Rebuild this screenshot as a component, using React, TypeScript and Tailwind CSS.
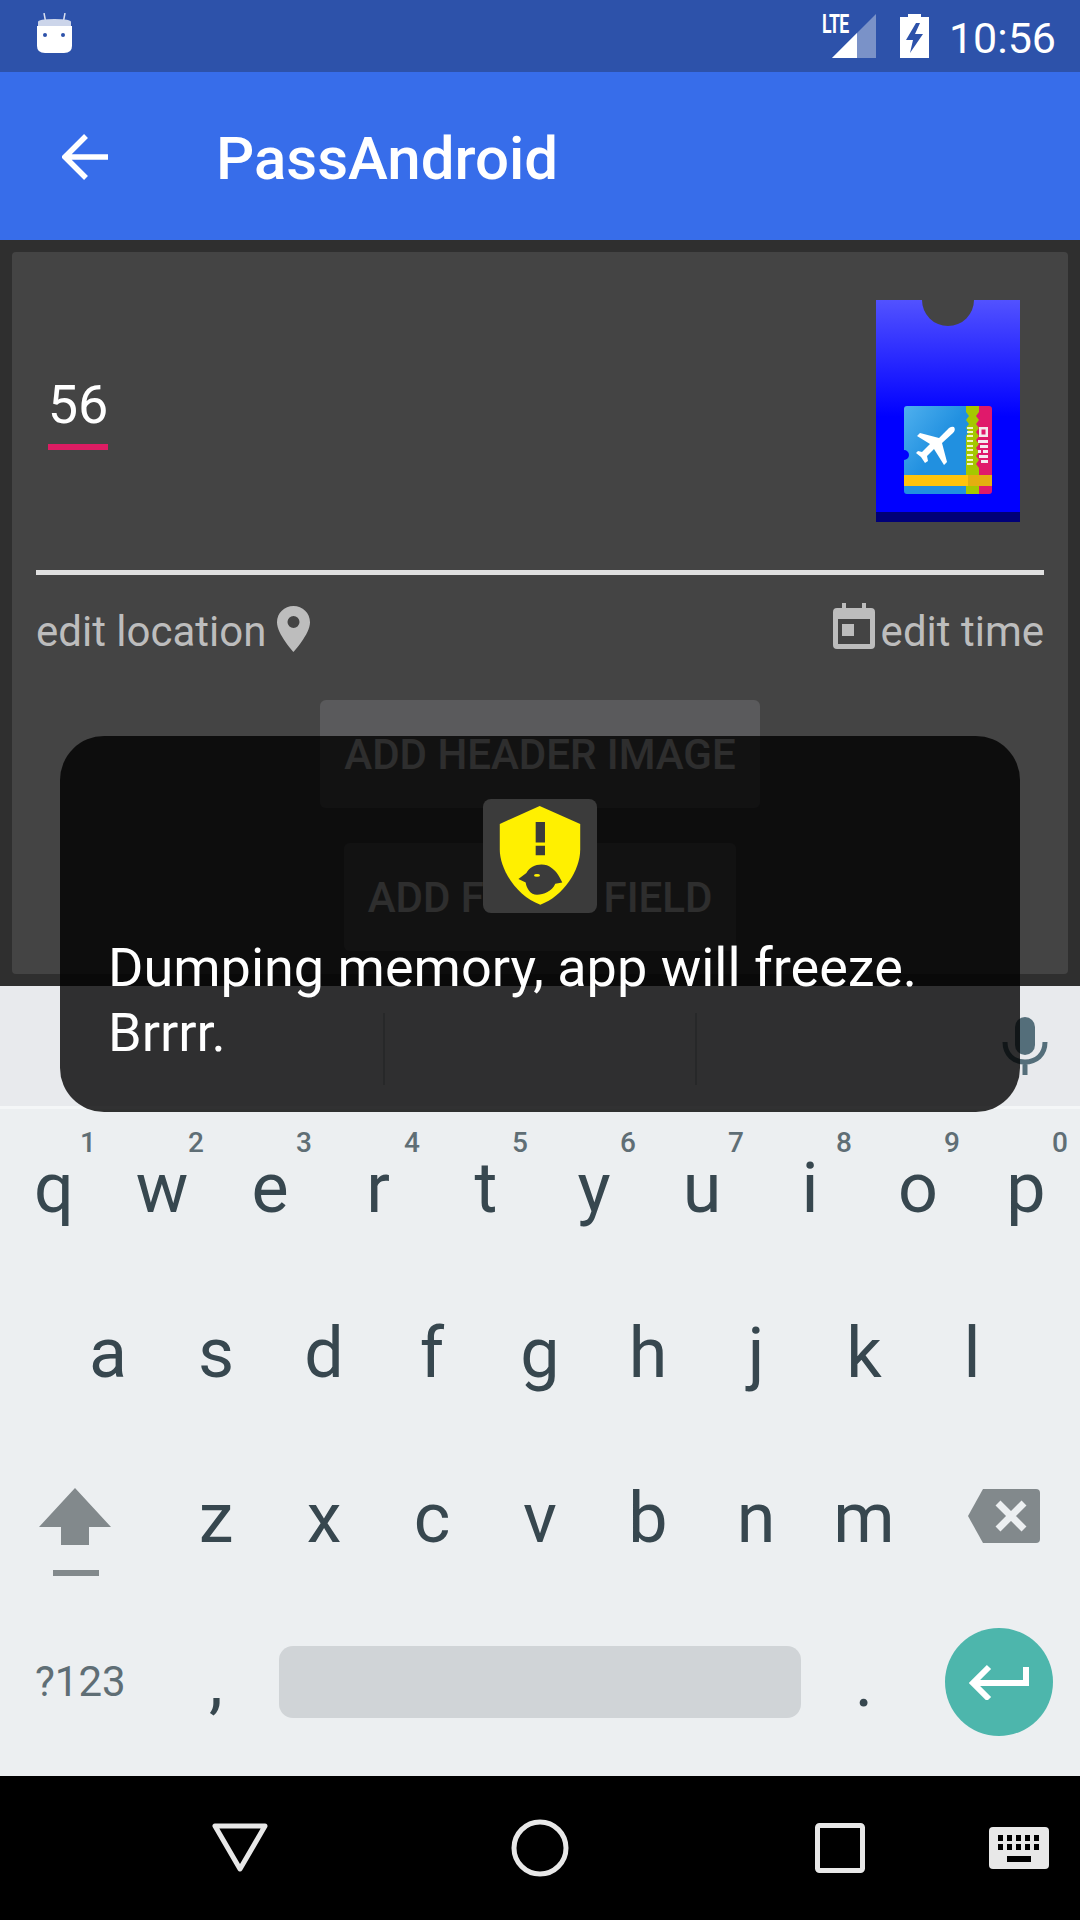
const Key = ({ c, hint }: { c: string; hint?: string }) => (
  <div className="relative flex-1 flex items-center justify-center pb-[23px] text-[70px] leading-none text-[#37474f]">
    {c}
    {hint && (
      <span className="absolute top-[11px] right-[12px] text-[28px] leading-[30px] font-medium text-[#5f6e75]">{hint}</span>
    )}
  </div>
);

const Row = ({ keys, hints }: { keys: string; hints?: string }) => (
  <div className="h-[165px] flex justify-center">
    {keys.split("").map((k, i) => (
      <div key={k} className="w-[108px] flex">
        <Key c={k} hint={hints ? hints[i] : undefined} />
      </div>
    ))}
  </div>
);

const Ticket = () => (
  <svg width="144" height="222" viewBox="0 0 144 222" className="shrink-0">
    <defs>
      <linearGradient id="tk" x1="0" y1="0" x2="0" y2="1">
        <stop offset="0" stopColor="#5252ff" />
        <stop offset="0.55" stopColor="#0000ff" />
        <stop offset="1" stopColor="#0000ff" />
      </linearGradient>
      <linearGradient id="bl" x1="0" y1="0" x2="1" y2="1">
        <stop offset="0" stopColor="#4fb0ee" />
        <stop offset="0.5" stopColor="#2190e0" />
      </linearGradient>
    </defs>
    <path d="M0 0H46A26 26 0 0 0 98 0H144V212H0Z" fill="url(#tk)" />
    <rect x="0" y="212" width="144" height="10" fill="#000077" />
    <rect x="80" y="106" width="36" height="88" rx="3" fill="#e0196b" />
    <path d="M80 106H103V112L100 116L103 120L100 124L103 128L100 132L103 136L100 140L103 144L100 148L103 152L100 156L103 160L100 164L103 168V194H80Z" fill="#a5c800" />
    <path d="M31 106H90V112L93 116L90 120L93 124L90 128L93 132L90 136V194H31Q28 194 28 191V160A4 4 0 0 0 28 150V109Q28 106 31 106Z" fill="url(#bl)" />
    <path d="M91 128h6M91 132h6M91 136h6M91 141h6M91 146h6M91 150h6M91 155h6M91 160h6M91 164h6" stroke="#eef5c8" strokeWidth="1.8" />
    <path fillRule="evenodd" d="M103 127h9v10h-9zM105.500 129.500v5h4v-5zM102 140h10v3h-10zM104 145h8v3h-8zM102 150h3v3h-3zM107 150h5v3h-5zM103 155h9v3h-9zM105 160h7v3h-7z" fill="#f4e8ee" />
    <rect x="28" y="175" width="88" height="11" fill="#ffc40c" />
    <rect x="92" y="175" width="24" height="11" fill="#e4ae10" />
    <path d="M78 127Q80 130 77 133L66 143L71 162L68 165L58 149L51 156L52 161L49 163L45 157L40 153L42 151L46 152L54 144L41 136L44 133L63 138L73 128Q76 126 78 127Z" fill="#ffffff" />
  </svg>
);

const CardBody = () => (
  <div className="w-full bg-[#444444] rounded-[4px] px-6 pt-12 flex flex-col">
    <div className="flex justify-between items-center pr-6 h-[222px]">
      <div className="ml-[12px] pt-[5px] w-[60px] flex flex-col items-center">
        <span className="text-[54px] leading-[56px] text-white">56</span>
        <div className="w-[60px] h-[6px] bg-[#dd1c63] mt-[11px]" />
      </div>
      <Ticket />
    </div>
    <div className="h-[5px] bg-[#e0e0e0] mt-[48px]" />
    <div className="flex justify-between items-center h-[48px] mt-[33px] text-[42px] leading-[48px] text-[#bdbdbd]">
      <div className="flex items-center gap-[11px]">
        <span>edit location</span>
        <svg width="33" height="46" viewBox="0 0 33 46" className="mb-[7px]">
          <path fillRule="evenodd" d="M16.5 0C7.4 0 0 7.200 0 16.200 0 28 16.500 46 16.500 46S33 28 33 16.200C33 7.200 25.600 0 16.500 0ZM16.500 22A6 6 0 1 1 16.500 10 6 6 0 0 1 16.500 22Z" fill="#bdbdbd" />
        </svg>
      </div>
      <div className="flex items-center gap-[6px]">
        <svg width="42" height="46" viewBox="0 0 42 46" className="mb-[13px]">
          <path fillRule="evenodd" d="M4 5H9V0H13V5H29V0H33V5H38Q42 5 42 9V42Q42 46 38 46H4Q0 46 0 42V9Q0 5 4 5ZM5 16V41H37V16ZM9 21H21V33H9Z" fill="#bdbdbd" />
        </svg>
        <span>edit time</span>
      </div>
    </div>
    <div className="flex flex-col items-center mt-[44px] gap-[35px] text-[42px] font-medium text-[#e4e4e4]">
      <div className="w-[440px] h-[108px] rounded-[6px] bg-[#5a5a5c] flex items-center justify-center">ADD HEADER IMAGE</div>
      <div className="w-[392px] h-[108px] rounded-[6px] bg-[#5a5a5c] flex items-center justify-center">ADD FRONT FIELD</div>
    </div>
  </div>
);

export default function App() {
  return (
    <div className="relative w-[1080px] h-[1920px] overflow-hidden flex flex-col bg-black font-['Roboto',sans-serif]">
      <div className="h-[72px] bg-[#2d52aa] flex items-center pl-[37px] pr-[24px] text-white">
        <svg width="35" height="41" viewBox="0 0 35 41" className="mb-[5px]">
          <path d="M7 0L8.500 8M28 0L26.500 8" stroke="#d8dff0" strokeWidth="1.500" />
          <path d="M1 9Q1 6 17.500 6T34 9V14H1Z" fill="#ccd5ea" />
          <path d="M0 13H35V33Q35 40 27 40H8Q0 40 0 33Z" fill="#fff" />
          <circle cx="8" cy="22" r="2" fill="#2d52aa" />
          <circle cx="26" cy="22" r="2" fill="#2d52aa" />
        </svg>
        <div className="flex-1" />
        <div className="relative w-[54px] h-[44px]">
          <span className="absolute left-0 top-[-2px] text-[26px] leading-[24px] font-bold tracking-[-1px] scale-x-[0.68] origin-left">LTE</span>
          <svg width="44" height="44" viewBox="0 0 44 44" className="absolute left-[10px] top-0">
            <path d="M0 44L44 0V44Z" fill="#7a92c8" />
            <path d="M0 44L25 19V44Z" fill="#fff" />
          </svg>
        </div>
        <svg width="29" height="44" viewBox="0 0 29 44" className="ml-[24px]">
          <path fillRule="evenodd" d="M8 0H21V3H29V44H0V3H8ZM16 9L6 26H13L10 39L23 20H15L20 9Z" fill="#fff" />
        </svg>
        <span className="ml-[20px] pt-[5px] text-[43px] leading-none">10:56</span>
      </div>

      <div className="h-[168px] bg-[#376dea] flex items-center pl-[62px] text-white">
        <svg width="48" height="48" viewBox="0 0 48 48" className="mt-[2px]">
          <path d="M46 24H4M24 3L3 24L24 45" fill="none" stroke="#fff" strokeWidth="5.500" />
        </svg>
        <span className="ml-[106px] pt-[5px] text-[60px] leading-none font-medium">PassAndroid</span>
      </div>

      <div className="h-[746px] bg-[#2f2f2f] px-3 pt-3 pb-[12px] flex">
        <CardBody />
      </div>

      <div className="h-[790px] bg-[#eceff1] flex flex-col">
        <div className="h-[123px] bg-[#e8eaed] border-b-[3px] border-[#f4f6f7] flex items-center relative">
          <div className="absolute left-[383px] top-[27px] w-[2px] h-[72px] bg-[#c4c8cb]" />
          <div className="absolute left-[695px] top-[27px] w-[2px] h-[72px] bg-[#c4c8cb]" />
          <svg width="46" height="58" viewBox="0 0 46 58" className="ml-auto mr-[32px]">
            <rect x="13" y="0" width="20" height="38" rx="10" fill="#546e7a" />
            <path d="M3 25C3 38 12 45 23 45S43 38 43 25M23 45V58" fill="none" stroke="#546e7a" strokeWidth="5" />
          </svg>
        </div>
        <div className="h-[8px]" />
        <Row keys="qwertyuiop" hints="1234567890" />
        <Row keys="asdfghjkl" />
        <div className="h-[165px] flex">
          <div className="w-[162px] flex items-start justify-center pt-[41px]">
            <svg width="72" height="88" viewBox="0 0 72 88" className="mr-[13px]">
              <path d="M36 0L72 39H50V57H22V39H0Z" fill="#82898c" />
              <rect x="14" y="82" width="46" height="6" fill="#82898c" />
            </svg>
          </div>
          {"zxcvbnm".split("").map((k) => (
            <div key={k} className="w-[108px] flex"><Key c={k} /></div>
          ))}
          <div className="flex-1 flex items-start pt-[42px] pl-[50px]">
            <svg width="72" height="54" viewBox="0 0 72 54" className="shrink-0">
              <path d="M15 0H68Q72 0 72 4V50Q72 54 68 54H15L0 27Z" fill="#82898c" />
              <path d="M30 14L56 40M56 14L30 40" stroke="#eceff1" strokeWidth="7" />
            </svg>
          </div>
        </div>
        <div className="flex-1 flex items-center pb-[24px]">
          <div className="w-[162px] pl-[35px] text-[42px] leading-none text-[#5f6e75]">?123</div>
          <div className="w-[108px] flex justify-center text-[70px] leading-none text-[#37474f]">,</div>
          <div className="w-[9px]" />
          <div className="w-[522px] h-[72px] rounded-[14px] bg-[#d0d4d7]" />
          <div className="w-[9px]" />
          <div className="w-[108px] flex justify-center text-[70px] leading-none text-[#37474f]">.</div>
          <div className="ml-[27px] w-[108px] h-[108px] rounded-full bg-[#4db6ac] flex items-center justify-center">
            <svg width="60" height="36" viewBox="0 0 60 36">
              <path d="M57 3V19H6M20 3L4 19L20 35" fill="none" stroke="#fff" strokeWidth="6" />
            </svg>
          </div>
        </div>
      </div>

      <div className="h-[144px] bg-black flex items-center relative">
        <svg width="58" height="50" viewBox="0 0 58 50" className="ml-[211px]">
          <path d="M4 3H54L29 46Z" fill="none" stroke="#e8e8e8" strokeWidth="5" strokeLinejoin="round" />
        </svg>
        <svg width="58" height="58" viewBox="0 0 58 58" className="ml-[242px]">
          <circle cx="29" cy="29" r="26" fill="none" stroke="#e8e8e8" strokeWidth="5" />
        </svg>
        <svg width="50" height="50" viewBox="0 0 50 50" className="ml-[246px]">
          <rect x="2.500" y="2.500" width="45" height="45" rx="2" fill="none" stroke="#e8e8e8" strokeWidth="5" />
        </svg>
        <svg width="60" height="42" viewBox="0 0 60 42" className="ml-[124px]">
          <rect width="60" height="42" rx="4" fill="#e8e8e8" />
          <path d="M9 8h5v6H9zM18 8h5v6h-5zM27 8h5v6h-5zM36 8h5v6h-5zM45 8h5v6h-5zM9 17h5v6H9zM18 17h5v6h-5zM27 17h5v6h-5zM36 17h5v6h-5zM45 17h5v6h-5zM18 29h24v6H18z" fill="#000" />
        </svg>
      </div>

      <div className="absolute left-[60px] top-[736px] w-[960px] h-[376px] rounded-[44px] bg-black/80 flex flex-col items-center pt-[63px]">
        <div className="w-[114px] h-[114px] rounded-[8px] bg-[#3b3b3b] flex items-center justify-center shrink-0">
          <svg width="114" height="114" viewBox="128 57 342 343">
            <path d="M298 78L420 132V210C420 270 370 350 300 375C230 350 178 270 178 210V132Z" fill="#fff000" />
            <path d="M286 126h28v62h-28zM286 198h28v28h-28z" fill="#3b3b3b" />
            <path d="M234 298L258 280C270 255 310 245 335 265C350 275 360 295 366 308L345 312C335 335 310 345 290 345C270 345 258 325 256 308Z" fill="#3b3b3b" />
            <ellipse cx="290" cy="287" rx="9" ry="4" fill="#fff000" />
          </svg>
        </div>
        <div className="w-full pl-[48px] pr-[40px] mt-[22px] text-[54px] leading-[65px] text-white">
          Dumping memory, app will freeze.<br />Brrrr.
        </div>
      </div>
    </div>
  );
}
